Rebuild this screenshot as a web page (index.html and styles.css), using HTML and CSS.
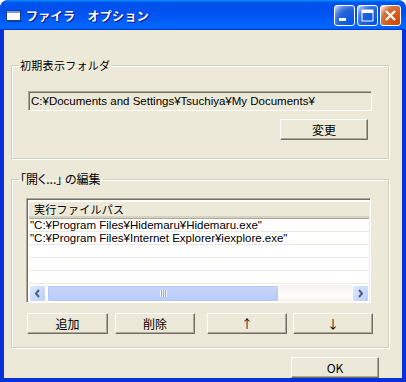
FILE: index.html
```html
<!DOCTYPE html>
<html lang="ja">
<head>
  <meta charset="UTF-8" />
  <title>ファイラ オプション</title>
  <link rel="stylesheet" href="styles.css">
</head>
<body>
  <div class="window">
    <div class="titlebar">
      <svg class="app-icon" width="16" height="12" viewBox="0 0 16 12">
        <rect x="0.5" y="0.5" width="14" height="10" fill="#fff" stroke="#1b3f8f" />
        <rect x="1" y="1" width="13" height="2" fill="#6f9be8" />
        <rect x="1" y="11" width="15" height="1" fill="#0a2a80" opacity="0.6" />
      </svg>
      <span class="title">ファイラ　オプション</span>
      <div class="caption-buttons">
        <span class="cap">
          <svg width="21" height="21" viewBox="0 0 21 21"><rect x="5" y="13" width="7" height="3" fill="#fff" /></svg>
        </span>
        <span class="cap">
          <svg width="21" height="21" viewBox="0 0 21 21"><rect x="5" y="5" width="11" height="11" fill="none" stroke="#fff" stroke-width="1" /><rect x="5" y="5" width="11" height="3" fill="#fff" /></svg>
        </span>
        <span class="cap cap-close">
          <svg width="21" height="21" viewBox="0 0 21 21"><path d="M6 6 L15 15 M15 6 L6 15" stroke="#fff" stroke-width="2.2" /></svg>
        </span>
      </div>
    </div>

    <div class="client">
      <fieldset class="group group-folder">
        <legend>初期表示フォルダ</legend>
        <div class="textbox">C:¥Documents and Settings¥Tsuchiya¥My Documents¥</div>
        <div class="row-right">
          <button class="btn btn-change">変更</button>
        </div>
      </fieldset>

      <fieldset class="group group-open">
        <legend>「開く...」 の編集</legend>
        <div class="listview">
          <div class="lv-header"><span class="lv-col">実行ファイルパス</span></div>
          <div class="lv-rows">
            <div class="lv-row">"C:¥Program Files¥Hidemaru¥Hidemaru.exe"</div>
            <div class="lv-row">"C:¥Program Files¥Internet Explorer¥iexplore.exe"</div>
            <div class="lv-row"></div>
            <div class="lv-row"></div>
            <div class="lv-row"></div>
            <div class="lv-row"></div>
          </div>
          <div class="hscroll">
            <span class="sb-arrow">
              <svg width="7" height="9" viewBox="0 0 7 9"><path d="M5 1 L2 4.5 L5 8" fill="none" stroke="#4d6185" stroke-width="2" /></svg>
            </span>
            <div class="sb-track">
              <span class="sb-thumb"><span class="grip"></span></span>
            </div>
            <span class="sb-arrow">
              <svg width="7" height="9" viewBox="0 0 7 9"><path d="M2 1 L5 4.5 L2 8" fill="none" stroke="#4d6185" stroke-width="2" /></svg>
            </span>
          </div>
        </div>
        <div class="btn-row">
          <button class="btn btn-add">追加</button>
          <button class="btn btn-del">削除</button>
          <button class="btn btn-up">↑</button>
          <button class="btn btn-down">↓</button>
        </div>
      </fieldset>

      <div class="footer">
        <button class="btn btn-ok">OK</button>
      </div>
    </div>
  </div>
</body>
</html>
```

FILE: styles.css
```css
html, body {
  margin: 0;
  padding: 0;
  background: #fff;
}
body {
  font-family: "Noto Sans CJK JP", "DejaVu Sans", sans-serif;
  font-size: 12px;
  color: #000;
}
.window {
  width: 406px;
  height: 382px;
  display: flex;
  flex-direction: column;
  background: #0831d9;
  border-radius: 8px 8px 0 0;
  overflow: hidden;
}

/* title bar */
.titlebar {
  height: 30px;
  flex: none;
  display: flex;
  align-items: center;
  padding: 0 5px 0 6px;
  box-sizing: border-box;
  background: linear-gradient(180deg, #0997ff, #0053ee 8%, #0050ee 40%, #0066ff 88%, #0066ff 93%, #005bff 95%, #003dd7 96%, #003dd7);
  border-radius: 8px 8px 0 0;
}
.app-icon {
  margin-top: 1px;
}
.title {
  margin-left: 4px;
  color: #fff;
  font-weight: bold;
  font-size: 12px;
  letter-spacing: 0.3px;
  text-shadow: 1px 1px 0 #0f1089;
  flex: 1;
}
.caption-buttons {
  display: flex;
  gap: 2px;
  margin-top: 1px;
}
.cap {
  width: 21px;
  height: 21px;
  box-sizing: border-box;
  border: 1px solid #fff;
  border-radius: 3px;
  display: flex;
  align-items: center;
  justify-content: center;
  background: radial-gradient(circle at 90% 90%, #0054e9 0%, #2263d5 55%, #4479e4 70%, #a3bbec 90%, #fff 100%);
}
.cap svg {
  margin: -1px;
}
.cap-close {
  background: radial-gradient(circle at 90% 90%, #cc4600 0%, #dc6527 55%, #cd7546 70%, #ffccb2 90%, #fff 100%);
}

/* client area */
.client {
  flex: 1;
  margin: 0 4px 4px;
  background: #ece9d8;
  display: flex;
  flex-direction: column;
}
.group {
  margin: 0 13px 0 7px;
  padding: 0;
  min-width: 0;
  border: 1px solid #d0d0bf;
  box-shadow: 1px 1px 0 #fff, inset 1px 1px 0 #fff;
}
.group legend {
  padding: 0 2px 0 1px;
  line-height: 14px;
  height: 14px;
  font-size: 11px;
  letter-spacing: 0.3px;
}
.group-folder {
  margin-top: 28px;
  padding: 19px 16px 18px 16px;
}
.group-folder legend {
  margin-left: -9px;
}
.group-open {
  margin-top: 13px;
  padding: 12px 17px 13px 14px;
}
.group-open legend {
  margin-left: -7px;
  font-size: 12px;
  letter-spacing: 0;
  font-feature-settings: "palt";
}

.textbox {
  height: 20px;
  box-sizing: border-box;
  border: 1px solid;
  border-color: #aca899 #fff #fff #aca899;
  box-shadow: inset 1px 1px 0 #716f64;
  padding: 0 0 0 2px;
  font-family: "Liberation Sans", "Noto Sans CJK JP", sans-serif;
  font-size: 11.5px;
  line-height: 18px;
  white-space: nowrap;
  overflow: hidden;
}
.row-right {
  display: flex;
  justify-content: flex-end;
  margin-top: 8px;
}

/* buttons */
.btn {
  font-family: inherit;
  font-size: 12px;
  height: 21px;
  padding: 0;
  box-sizing: border-box;
  background: #ece9d8;
  color: #000;
  border: 1px solid;
  border-color: #fff #716f64 #716f64 #fff;
  box-shadow: inset -1px -1px 0 #aca899;
  border-radius: 0;
  line-height: 18px;
}
.btn-change {
  width: 88px;
  margin-right: 4px;
}

/* list view */
.listview {
  height: 105px;
  box-sizing: border-box;
  border: 1px solid;
  border-color: #aca899 #fff #fff #aca899;
  box-shadow: inset 1px 1px 0 #716f64, inset -1px -1px 0 #f1efe2;
  padding: 2px 1px 1px 2px;
  background: #fff;
  display: flex;
  flex-direction: column;
}
.lv-header {
  height: 18px;
  flex: none;
  box-sizing: border-box;
  background: #ece9d8;
  border-bottom: 1px solid #aca899;
  box-shadow: inset 0 -2px 0 #d6d2c2, inset 0 1px 0 #fff;
  padding-left: 5px;
  line-height: 16px;
  font-size: 11px;
  letter-spacing: 0.3px;
}
.lv-rows {
  height: 66px;
  flex: none;
  overflow: hidden;
}
.lv-row {
  height: 12px;
  line-height: 12px;
  border-bottom: 1px solid #ece9e0;
  padding-left: 1px;
  font-family: "Liberation Sans", "Noto Sans CJK JP", sans-serif;
  font-size: 11.5px;
  white-space: nowrap;
}

/* scroll bar */
.hscroll {
  height: 17px;
  flex: none;
  display: flex;
  background: linear-gradient(180deg, #f3f1ec, #fefefb 60%, #f3f1ec);
}
.sb-arrow {
  width: 17px;
  height: 17px;
  box-sizing: border-box;
  border: 1px solid #fff;
  border-radius: 2px;
  background: linear-gradient(135deg, #dde8fe, #bccefa);
  display: flex;
  align-items: center;
  justify-content: center;
}
.sb-track {
  flex: 1;
  display: flex;
  padding: 0 1px;
}
.sb-thumb {
  width: 232px;
  box-sizing: border-box;
  border: 1px solid #fff;
  border-radius: 2px;
  box-shadow: inset 0 0 0 1px #b4c8f6;
  background: linear-gradient(180deg, #c6d6fc, #c0d2fb 50%, #b8cbf8);
  display: flex;
  align-items: center;
  justify-content: center;
}
.grip {
  width: 7px;
  height: 7px;
  background: repeating-linear-gradient(90deg, #eef4fe 0 1px, #8caae6 1px 2px);
}

.btn-row {
  display: flex;
  margin: 10px -2px 0 1px;
}
.btn-row .btn {
  width: 80px;
}
.btn-add {
  margin-right: 7px;
}
.btn-row .btn-add {
  width: 81px;
}
.btn-del {
  margin-right: 12px;
}
.btn-up {
  margin-right: 6px;
}

.footer {
  display: flex;
  justify-content: flex-end;
  margin: 9px 23px 0 0;
}
.btn-ok {
  width: 88px;
}
```
